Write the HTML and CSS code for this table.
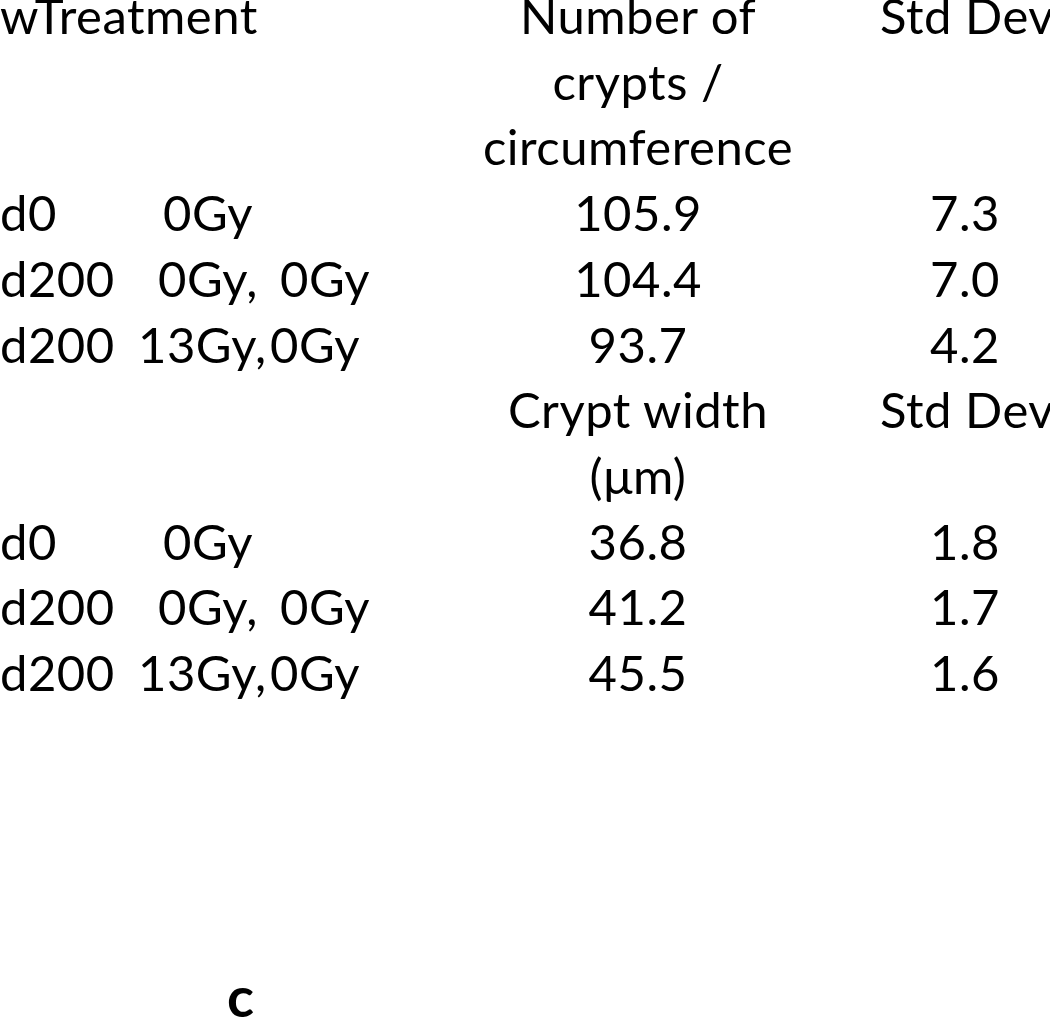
FILE: index.html
```html
<!DOCTYPE html>
<html lang="en">
<head>
<meta charset="utf-8">
<title>Crypt table</title>
<link rel="stylesheet" href="styles.css">
</head>
<body>
<div class="page">
  <div class="table">
    <div class="cell treat">wTreatment</div>
    <div class="cell num">Number of<br>crypts /<br>circumference</div>
    <div class="cell sd">Std Dev</div>

    <div class="cell treat"><span class="day">d0</span><span class="dose one">0Gy</span></div>
    <div class="cell num">105.9</div>
    <div class="cell sd">7.3</div>

    <div class="cell treat"><span class="day">d200</span><span class="dose two">0Gy,</span><span class="dose2 two">0Gy</span></div>
    <div class="cell num">104.4</div>
    <div class="cell sd">7.0</div>

    <div class="cell treat"><span class="day">d200</span><span class="dose three">13Gy,</span><span class="dose2 three">0Gy</span></div>
    <div class="cell num">93.7</div>
    <div class="cell sd">4.2</div>

    <div class="cell treat"></div>
    <div class="cell num">Crypt width<br>(μm)</div>
    <div class="cell sd">Std Dev</div>

    <div class="cell treat"><span class="day">d0</span><span class="dose one">0Gy</span></div>
    <div class="cell num">36.8</div>
    <div class="cell sd">1.8</div>

    <div class="cell treat"><span class="day">d200</span><span class="dose two">0Gy,</span><span class="dose2 two">0Gy</span></div>
    <div class="cell num">41.2</div>
    <div class="cell sd">1.7</div>

    <div class="cell treat"><span class="day">d200</span><span class="dose three">13Gy,</span><span class="dose2 three">0Gy</span></div>
    <div class="cell num">45.5</div>
    <div class="cell sd">1.6</div>
  </div>
  <div class="label">c</div>
</div>
</body>
</html>
```

FILE: styles.css
```css
html, body {
  margin: 0;
  padding: 0;
  background: #ffffff;
}

body {
  font-family: "Lato", "Open Sans", sans-serif;
  color: #000000;
}

.page {
  display: flow-root;
  width: 1050px;
}

.table {
  display: grid;
  grid-template-columns: 480px 400px 170px;
  font-size: 49px;
  letter-spacing: 0.5px;
  line-height: 65.7px;
  margin-top: -17px;
}

.cell {
  white-space: nowrap;
}

.num {
  text-align: center;
  padding-right: 84px;
}

.sd {
  text-align: center;
}

.treat {
  display: grid;
  grid-template-columns: 138px 132px 1fr;
}

.treat .day {
  grid-column: 1;
}

.dose {
  grid-column: 2;
}

.dose.one {
  padding-left: 25px;
}

.dose.two {
  padding-left: 20px;
}

.dose2 {
  grid-column: 3;
}

.dose2.two {
  padding-left: 10px;
}

.label {
  margin-top: 260px;
  padding-left: 227px;
  font-size: 56px;
  font-weight: bold;
  line-height: 60px;
}
```
